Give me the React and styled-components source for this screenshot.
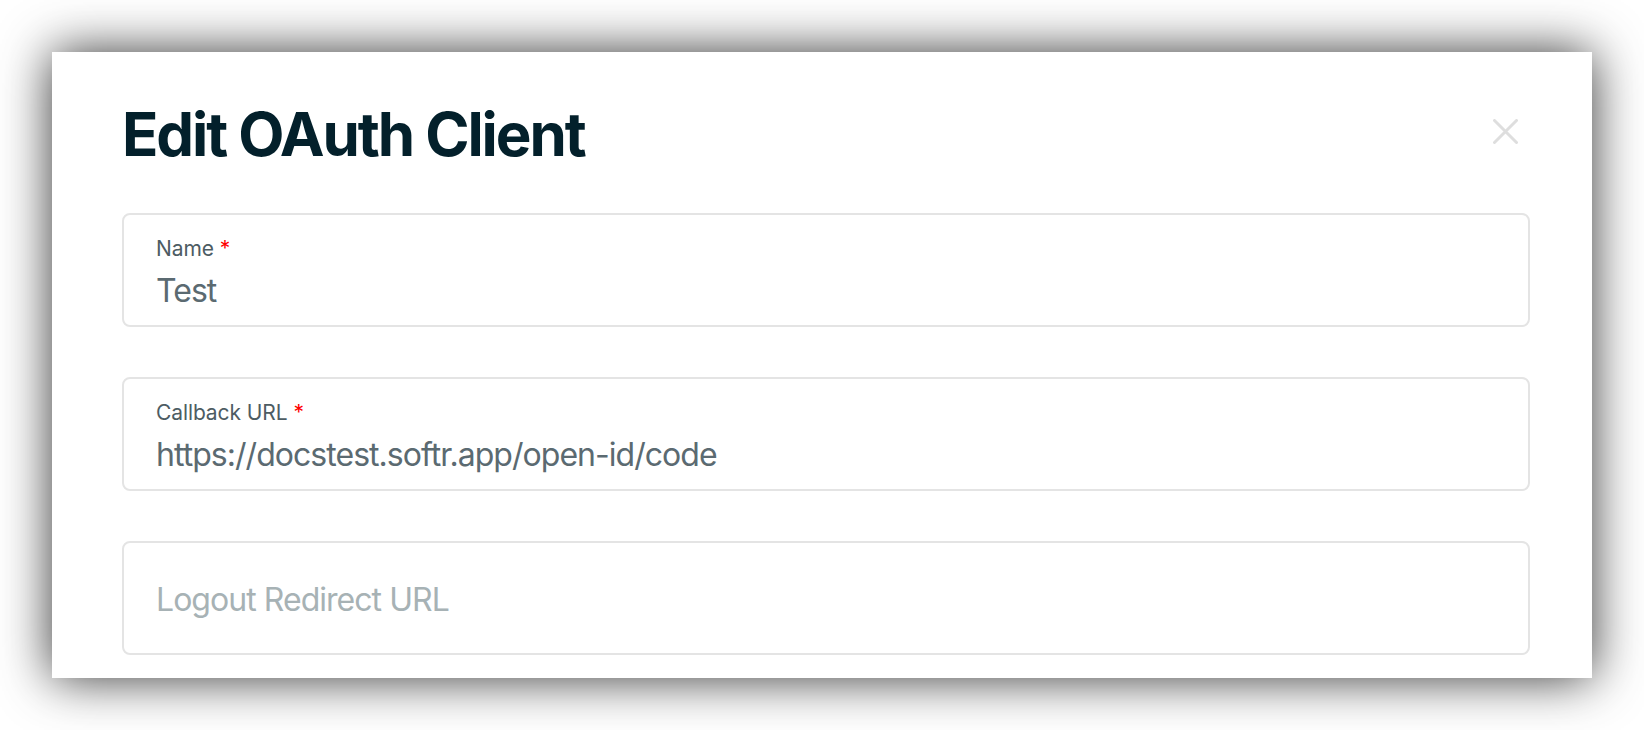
import React from "react";
import styled, { createGlobalStyle } from "styled-components";

const Global = createGlobalStyle`
  html, body { margin: 0; padding: 0; background: #ffffff; }
  body { font-family: Inter, "Liberation Sans", Arial, sans-serif; }
`;

const Page = styled.div`
  padding: 52px;
  width: 1644px;
  height: 730px;
  box-sizing: border-box;
  overflow: hidden;
`;

const Modal = styled.div`
  width: 1540px;
  height: 626px;
  box-sizing: border-box;
  background: #ffffff;
  box-shadow: 0 0 48px rgba(0, 0, 0, 0.8);
  padding: 46px 62px 0 70px;
  overflow: hidden;
`;

const Header = styled.div`
  display: flex;
  align-items: center;
  justify-content: space-between;
  padding-right: 12px;
`;

const Title = styled.h1`
  margin: 0;
  font-size: 60px;
  line-height: 72px;
  font-weight: 700;
  letter-spacing: -2.1px;
  color: #03202b;
`;

const CloseButton = styled.button`
  border: 0;
  background: none;
  padding: 0;
  width: 25px;
  height: 25px;
  margin-bottom: 6px;
  display: flex;
  cursor: pointer;
`;

const Form = styled.div`
  margin-top: 43px;
  display: flex;
  flex-direction: column;
  gap: 50px;
`;

const Field = styled.div`
  height: 114px;
  box-sizing: border-box;
  border: 2px solid #e4e4e4;
  border-radius: 8px;
  padding: ${(p) => (p.$empty ? "3px 32px 0" : "20px 32px 0")};
  display: flex;
  flex-direction: column;
  justify-content: ${(p) => (p.$empty ? "center" : "flex-start")};
  gap: 8px;
`;

const Label = styled.div`
  font-size: 21px;
  line-height: 28px;
  letter-spacing: -0.1px;
  color: #4d5c63;
`;

const Required = styled.span`
  color: #ff0000;
  margin-left: 6px;
`;

const Value = styled.div`
  font-size: 32px;
  line-height: 40px;
  letter-spacing: -0.96px;
  color: ${(p) => (p.$placeholder ? "#a7b2b5" : "#5b6a71")};
`;

function CloseIcon() {
  return (
    <svg width="25" height="25" viewBox="0 0 25 25">
      <path d="M1.5 1.5 L23.5 23.5 M23.5 1.5 L1.5 23.5" stroke="#dedede" strokeWidth="3" strokeLinecap="round" />
    </svg>
  );
}

export default function App() {
  return (
    <>
      <Global />
      <Page>
        <Modal>
          <Header>
            <Title>Edit OAuth Client</Title>
            <CloseButton aria-label="Close">
              <CloseIcon />
            </CloseButton>
          </Header>
          <Form>
            <Field>
              <Label>
                Name<Required>*</Required>
              </Label>
              <Value>Test</Value>
            </Field>
            <Field>
              <Label>
                Callback URL<Required>*</Required>
              </Label>
              <Value>https://docstest.softr.app/open-id/code</Value>
            </Field>
            <Field $empty>
              <Value $placeholder>Logout Redirect URL</Value>
            </Field>
          </Form>
        </Modal>
      </Page>
    </>
  );
}
